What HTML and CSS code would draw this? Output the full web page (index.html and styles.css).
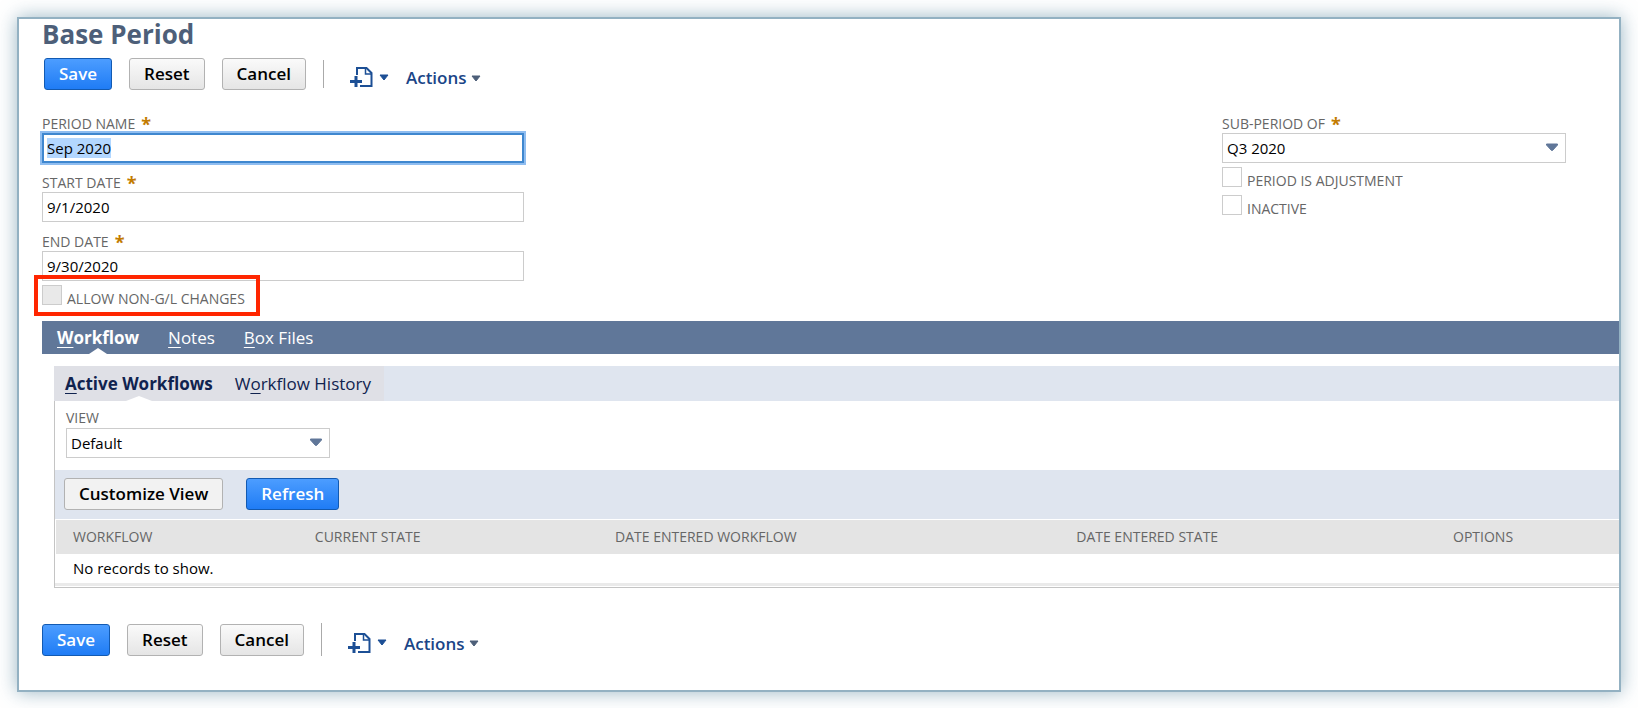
FILE: index.html
```html
<!DOCTYPE html>
<html lang="en">
<head>
<meta charset="utf-8">
<title>Base Period</title>
<link rel="stylesheet" href="styles.css">
</head>
<body>
<svg class="defs" aria-hidden="true">
  <symbol id="icon-new" viewBox="0 0 24 22">
    <path d="M7 9V2H16.500L21.500 7V20H10" fill="none" stroke="#1c4f95" stroke-width="2"/>
    <path d="M15.500 2V8H21.500" fill="none" stroke="#1c4f95" stroke-width="1.500"/>
    <path d="M6 10V21M0 15.500H12" fill="none" stroke="#1c4f95" stroke-width="3"/>
  </symbol>
  <symbol id="icon-caret" viewBox="0 0 10 7"><path d="M1 1H9L5 6Z" fill="currentColor" stroke="currentColor" stroke-linejoin="round"/></symbol>
  <symbol id="icon-drop" viewBox="0 0 14 9"><path d="M1.500 1H12.500V2L7.500 7.500H6.500L1.500 2Z" fill="#607799" stroke="#607799" stroke-linejoin="round"/></symbol>
</svg>
<main class="frame">
  <h1 class="title">Base Period</h1>
  <div class="toolbar">
    <button class="btn btn-primary" type="submit" form="period">Save</button>
    <button class="btn" type="reset" form="period">Reset</button>
    <button class="btn" type="button">Cancel</button>
    <span class="divider"></span>
    <button class="menu menu-new" type="button" aria-label="New"><svg class="icon-new"><use href="#icon-new"/></svg><svg class="caret"><use href="#icon-caret"/></svg></button>
    <button class="menu" type="button">Actions<svg class="caret caret-dark"><use href="#icon-caret"/></svg></button>
  </div>

  <form class="fields" id="period">
    <div class="column">
      <div class="field">
        <label class="label" for="name">PERIOD NAME <span class="required">*</span></label>
        <input class="input input-active" id="name" type="text" value="Sep 2020">
      </div>
      <div class="field">
        <label class="label" for="start">START DATE <span class="required">*</span></label>
        <input class="input" id="start" type="text" value="9/1/2020">
      </div>
      <div class="field field-last">
        <label class="label" for="end">END DATE <span class="required">*</span></label>
        <input class="input" id="end" type="text" value="9/30/2020">
      </div>
      <div class="check highlight">
        <input class="box" id="nongl" type="checkbox" disabled>
        <label class="check-label" for="nongl">ALLOW NON-G/L CHANGES</label>
      </div>
    </div>
    <div class="column column-side">
      <div class="field field-last">
        <label class="label" for="parent">SUB-PERIOD OF <span class="required">*</span></label>
        <div class="select-wrap">
          <select class="input select" id="parent"><option>Q3 2020</option></select>
          <svg class="drop"><use href="#icon-drop"/></svg>
        </div>
      </div>
      <div class="check">
        <input class="box" id="adjust" type="checkbox">
        <label class="check-label" for="adjust">PERIOD IS ADJUSTMENT</label>
      </div>
      <div class="check">
        <input class="box" id="inactive" type="checkbox">
        <label class="check-label" for="inactive">INACTIVE</label>
      </div>
    </div>
  </form>

  <nav class="tabs">
    <a class="tab tab-on" href="#workflow"><u>W</u>orkflow</a>
    <a class="tab" href="#notes"><u>N</u>otes</a>
    <a class="tab" href="#files"><u>B</u>ox Files</a>
  </nav>

  <section class="panel" id="workflow">
    <nav class="subtabs">
      <div class="subtab-group">
        <a class="subtab subtab-on" href="#active"><u>A</u>ctive Workflows</a>
        <a class="subtab" href="#history">W<u>o</u>rkflow History</a>
      </div>
    </nav>
    <div class="panel-body" id="active">
      <div class="view">
        <label class="view-label" for="view">VIEW</label>
        <div class="select-wrap select-wrap-view">
          <select class="input select" id="view"><option>Default</option></select>
          <svg class="drop"><use href="#icon-drop"/></svg>
        </div>
      </div>
      <div class="actions">
        <button class="btn btn-flat" type="button">Customize View</button>
        <button class="btn btn-primary" type="button">Refresh</button>
      </div>
      <table class="list">
        <colgroup><col class="c1"><col class="c2"><col class="c3"><col class="c4"><col></colgroup>
        <thead><tr><th>WORKFLOW</th><th>CURRENT STATE</th><th>DATE ENTERED WORKFLOW</th><th>DATE ENTERED STATE</th><th>OPTIONS</th></tr></thead>
        <tbody><tr><td colspan="5">No records to show.</td></tr></tbody>
      </table>
    </div>
  </section>

  <div class="toolbar toolbar-bottom">
    <button class="btn btn-primary" type="submit" form="period">Save</button>
    <button class="btn" type="reset" form="period">Reset</button>
    <button class="btn" type="button">Cancel</button>
    <span class="divider"></span>
    <button class="menu menu-new" type="button" aria-label="New"><svg class="icon-new"><use href="#icon-new"/></svg><svg class="caret"><use href="#icon-caret"/></svg></button>
    <button class="menu" type="button">Actions<svg class="caret caret-dark"><use href="#icon-caret"/></svg></button>
  </div>
</main>
<script src="main.js"></script>
</body>
</html>
```
FILE: main.js
```js
const nameField = document.getElementById('name');
nameField.focus();
nameField.select();
```
FILE: styles.css
```css
* { box-sizing: border-box; }
body {
  margin: 0;
  padding: 17px;
  background: #fff;
  font: 15px/20px "Open Sans", "Noto Sans", sans-serif;
  color: #000;
}
button, input, select { font: inherit; color: inherit; }
.defs { position: absolute; width: 0; height: 0; }
.frame {
  border: 2px solid #93b1c2;
  background: #fff;
  box-shadow: 0 0 18px rgba(70, 120, 145, .55);
  padding: 0 0 34px 23px;
}
.title {
  margin: 0;
  font-size: 26px;
  line-height: 30px;
  font-weight: 700;
  color: #4d5f79;
}
.toolbar { display: flex; align-items: center; padding: 9px 0 0 2px; }
.toolbar-bottom { padding: 35px 0 0; }
.btn {
  height: 32px;
  padding: 0 14px;
  border: 1px solid #b2b2b2;
  border-radius: 3px;
  background: linear-gradient(#fafafa, #e5e5e5);
  font-size: 17px;
  font-weight: 600;
  line-height: 28px;
  white-space: nowrap;
}
.toolbar .btn { margin-right: 17px; }
.btn-flat { background: #f2f2f2; }
.btn-primary {
  border-color: #125ab2;
  background: linear-gradient(#4c9dff, #1f7cf5);
  color: #fff;
}
.divider { width: 1px; height: 28px; background: #aaa; }
.toolbar-bottom .divider { height: 33px; }
.menu {
  display: flex;
  align-items: center;
  gap: 4px;
  margin-left: 17px;
  padding: 8px 0 0;
  border: 0;
  background: none;
  font-size: 17px;
  font-weight: 600;
  color: #1a4587;
}
.menu-new { gap: 5px; padding-top: 6px; margin-left: 26px; }
.icon-new { width: 24px; height: 22px; }
.caret { width: 10px; height: 7px; color: #1c4f95; }
.caret-dark { color: #4d5f79; }
.fields {
  display: flex;
  justify-content: space-between;
  padding-top: 24px;
}
.column { flex: 0 1 482px; }
.column-side { flex-basis: 397px; }
.field { height: 59px; }
.field-last { height: 53px; }
.label {
  display: flex;
  height: 19px;
  font-size: 14px;
  line-height: 20px;
  color: #666;
}
.required {
  margin-left: 6px;
  font-size: 18px;
  font-weight: 700;
  color: #c27b00;
}
.input {
  display: block;
  width: 100%;
  height: 30px;
  margin: 0;
  padding: 0 4px;
  border: 1px solid #ccc;
  border-radius: 0;
  background: #fff;
}
.input-active, .input-active:focus {
  border: 2px solid #3f87cf;
  outline: 0;
  padding: 0 3px;
  box-shadow: 0 0 0 2px #8fbdf0;
}
.input-active::selection { background: #b3d7ff; color: #000; }
.select-wrap { position: relative; max-width: 344px; }
.select-wrap-view { max-width: 264px; }
.select { appearance: none; }
.drop {
  position: absolute;
  right: 7px;
  top: 10px;
  width: 14px;
  height: 9px;
  pointer-events: none;
}
.check { display: flex; gap: 5px; height: 28px; }
.box {
  appearance: none;
  width: 20px;
  height: 20px;
  margin: 0;
  border: 1px solid #ccc;
  background: #fff;
}
.box:disabled { background: #e9e9e9; }
.check-label {
  padding-top: 4px;
  font-size: 14px;
  line-height: 20px;
  color: #666;
}
.highlight {
  position: relative;
  width: max-content;
  height: 36px;
}
.highlight::after {
  content: "";
  position: absolute;
  inset: -10px -15px 5px -8px;
  border: 4px solid #ff2600;
}
.tabs {
  display: flex;
  gap: 29px;
  height: 33px;
  padding-left: 15px;
  background: #607799;
}
.tab, .subtab {
  position: relative;
  font-size: 17px;
  line-height: 34px;
  text-decoration: none;
  white-space: nowrap;
}
.tab { color: #fff; }
.tab-on, .subtab-on { font-weight: 700; }
.tab-on::after, .subtab-on::after {
  content: "";
  position: absolute;
  left: 50%;
  bottom: 0;
  border: 9px solid transparent;
  border-top: 0;
  border-bottom: 6px solid #fff;
  margin-left: -9px;
}
.subtab-on::after { border-width: 0 13px 5px; margin-left: -13px; }
u { text-underline-offset: 3px; text-decoration-thickness: 1px; }
.panel { margin: 12px 0 0 12px; }
.subtabs { background: #dfe5ef; }
.subtab-group {
  display: flex;
  gap: 22px;
  width: max-content;
  height: 35px;
  padding: 0 13px 0 11px;
  background: #dfe0e6;
}
.subtab { line-height: 35px; color: #10234f; }
.panel-body { border: solid #c4c4c4; border-width: 0 0 1px 1px; padding-bottom: 1px; }
.view { padding: 7px 0 12px 11px; }
.view-label {
  display: block;
  font-size: 14px;
  line-height: 20px;
  color: #666;
}
.actions {
  display: flex;
  gap: 23px;
  height: 49px;
  padding: 8px 9px 0;
  background: #dfe5ef;
}
.list {
  width: 100%;
  table-layout: fixed;
  border-collapse: collapse;
  border: solid #fff;
  border-width: 1px 0 0 1px;
}
.c1 { width: 15.5%; }
.c2 { width: 19.2%; }
.c3 { width: 29.5%; }
.c4 { width: 24.1%; }
th, td { padding: 0 0 0 17px; text-align: left; white-space: nowrap; }
th {
  height: 34px;
  background: #e4e4e4;
  font-size: 14px;
  font-weight: 400;
  color: #666;
}
td { height: 31px; border-bottom: 3px solid #eaeaea; }
```
